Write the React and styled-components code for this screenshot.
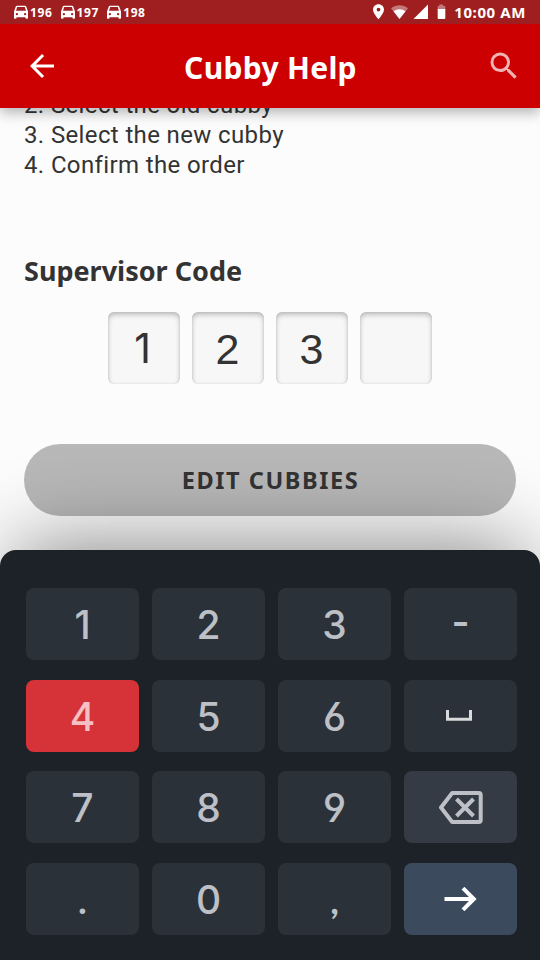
import React from "react";
import styled, { createGlobalStyle } from "styled-components";

const GlobalStyle = createGlobalStyle`
  *, *::before, *::after { box-sizing: border-box; }
  body { margin: 0; background: #fcfcfc; font-family: "Noto Sans", sans-serif; }
  button { border: 0; padding: 0; font: inherit; }
  svg { display: block; flex: none; }
`;

const Screen = styled.div`
  display: flex;
  flex-direction: column;
  width: 540px;
  height: 960px;
  overflow: hidden;
  background: #fcfcfc;
  color: #333;
`;

const StatusBar = styled.div`
  position: relative;
  z-index: 2;
  display: flex;
  align-items: center;
  justify-content: space-between;
  flex: none;
  height: 24px;
  padding: 0 14px 0 13px;
  background: #9f1f21;
  color: #fff;
`;

const Orders = styled.div`
  display: flex;
  gap: 7px;
`;

const Order = styled.span`
  display: flex;
  align-items: center;
  gap: 1px;
  width: 39.6px;
  font: 700 12px/25px "Noto Sans", sans-serif;
  letter-spacing: 0.6px;
`;

const SystemIcons = styled.div`
  display: flex;
  align-items: center;
`;

const Clock = styled.span`
  margin-left: 8px;
  font: 700 15px/24px "Noto Sans", sans-serif;
  letter-spacing: 0.6px;
  white-space: nowrap;
`;

const Header = styled.header`
  position: relative;
  z-index: 1;
  display: grid;
  grid-template-columns: 36px 1fr 36px;
  align-items: center;
  flex: none;
  height: 84px;
  padding: 0 18px 0 24px;
  background: #c00;
  box-shadow: 0 5px 12px rgba(0, 0, 0, 0.28);
`;

const Title = styled.h1`
  margin: 4px 5px 0 0;
  color: #fff;
  font: 700 30px/40px "Noto Sans", sans-serif;
  letter-spacing: 0.3px;
  text-align: center;
`;

const IconButton = styled.button`
  background: none;
  color: ${(p) => (p.$faded ? "rgba(255,255,255,.7)" : "#fff")};
`;

const Content = styled.main`
  display: flex;
  flex-direction: column;
  flex: none;
  height: 442px;
  padding: 0 24px;
`;

const Steps = styled.div`
  margin-top: -18px;
  font: 400 24px/30px Roboto, sans-serif;
  letter-spacing: 0.37px;
`;

const Step = styled.div`
  white-space: pre;
`;

const SectionTitle = styled.h2`
  margin: 71px 0 0;
  font: 700 27px/40px "Noto Sans", sans-serif;
`;

const CodeRow = styled.div`
  display: flex;
  justify-content: center;
  gap: 12px;
  margin-top: 21px;
`;

const CodeBox = styled.div`
  width: 72px;
  height: 72px;
  padding-right: ${(p) => (p.$plainOne ? "3px" : "1px")};
  border-radius: 6px;
  background: #f7f7f7;
  box-shadow: inset 0 3px 5px rgba(0, 0, 0, 0.22), inset 0 0 3px rgba(0, 0, 0, 0.1);
  font: ${(p) => (p.$plainOne ? "400 41px/73px Inter" : '400 43px/74px "Liberation Sans"')}, sans-serif;
  text-align: center;
`;

const EditButton = styled.button`
  flex: none;
  height: 72px;
  margin-top: 60px;
  padding-left: 1px;
  border-radius: 36px;
  background: #b8b8b8;
  color: #333;
  font: 700 23.5px/72px "Noto Sans", sans-serif;
  letter-spacing: 1.6px;
`;

const Keypad = styled.div`
  position: relative;
  display: grid;
  grid-template-columns: repeat(4, 113px);
  grid-auto-rows: 72px;
  gap: 19.8px 13px;
  flex: none;
  height: 410px;
  padding: 37.8px 23px 0 26px;
  border-radius: 16px 16px 0 0;
  background: #1d2228;
  box-shadow: 0 -20px 80px -16px rgba(0, 0, 0, 0.47);
`;

const keyColors = {
  plain: "#2b3138",
  active: "#d63339",
  light: "#343b44",
  enter: "#3b4b5d",
};

const keyFonts = {
  digit: "500 39px/72px Inter",
  mark: "700 37px/72px Lato",
  dash: "600 39px/68px Inter",
};

const keyPadding = {
  digit: "2px 0 0",
  mark: "1px 0 0",
  dash: "0 0 3px",
};

const Key = styled.button`
  display: flex;
  align-items: center;
  justify-content: center;
  padding: ${(p) => keyPadding[p.$kind] || 0};
  border-radius: 8px;
  background: ${(p) => keyColors[p.$tone || "plain"]};
  color: ${(p) => (p.$tone === "active" ? "#f5bfc3" : "#bdc0c6")};
  font: ${(p) => keyFonts[p.$kind] || keyFonts.digit}, sans-serif;
  font-feature-settings: "cv03", "cv04";
`;

const CarIcon = () => (
  <svg width="16" height="14" viewBox="0 0 16 14" fill="currentColor">
    <path fillRule="evenodd" d="M4 .8h8c.7 0 1.1.3 1.3.9L15 6.5V13c0 .5-.3.8-.8.8h-.9c-.5 0-.8-.3-.8-.8v-.8h-9v.8c0 .5-.3.8-.8.8h-.9c-.5 0-.8-.3-.8-.8V6.5l1.700-4.800C2.900 1.100 3.300.8 4 .8ZM4.200 2 3 5.700h10L11.800 2ZM3.900 8a1.150 1.150 0 1 0 0 2.300 1.150 1.150 0 0 0 0-2.300Zm8.200 0a1.150 1.150 0 1 0 0 2.300 1.150 1.150 0 0 0 0-2.300Z" />
  </svg>
);

const BackIcon = () => (
  <svg width="36" height="36" viewBox="0 0 24 24" fill="currentColor">
    <path d="M20 11H7.830l5.590-5.590L12 4l-8 8 8 8 1.410-1.410L7.830 13H20z" />
  </svg>
);

const SearchIcon = () => (
  <svg width="36" height="36" viewBox="0 0 24 24" fill="currentColor">
    <path d="M15.500 14h-.79l-.28-.27A6.471 6.471 0 0 0 16 9.500 6.500 6.500 0 1 0 9.500 16c1.610 0 3.090-.59 4.230-1.570l.27.28v.79l5 4.990L20.490 19zm-6 0C7.010 14 5 11.990 5 9.500S7.010 5 9.500 5 14 7.010 14 9.500 11.990 14 9.500 14" />
  </svg>
);

const StatusGlyphs = () => (
  <svg width="74" height="16" viewBox="0 0 74 16" fill="#fff">
    <path fillRule="evenodd" d="M6.500.2C3.400.2 1 2.600 1 5.600 1 9.500 6.500 15.300 6.500 15.300S12 9.500 12 5.600C12 2.600 9.600.2 6.500.2Zm0 3.500a1.900 1.900 0 1 1 0 3.800 1.900 1.900 0 0 1 0-3.800Z" />
    <path opacity=".4" d="M27.500 15 19 4.300c5-4.200 12-4.200 17 0Z" />
    <path d="M27.500 15 21.500 7.300c3.600-2.800 8.400-2.800 12 0Z" />
    <path d="M56 .5V15H41.500Z" />
    <path opacity=".4" d="M67.300.5h3.800v1.400h2.200v4h-7.600v-4h1.600Z" />
    <path d="M65.700 5h7.600v9c0 .7-.4 1-1 1h-5.600c-.6 0-1-.3-1-1Z" />
  </svg>
);

const SpaceIcon = () => (
  <svg width="30" height="11" viewBox="0 0 30 11" fill="none" stroke="#d8dadb" strokeWidth="3">
    <path d="M1.500 0v9.300h23V0" />
  </svg>
);

const BackspaceIcon = () => (
  <svg width="44" height="33" viewBox="0 0 44 33" fill="none" stroke="currentColor" strokeWidth="4">
    <path strokeLinejoin="round" d="M13.200 2h26.500c1.300 0 2 .7 2 2v25c0 1.300-.7 2-2 2H13.200L2 16.500Z" />
    <path d="m17.500 8 17 17m0-17-17 17" />
  </svg>
);

const EnterIcon = () => (
  <svg width="33" height="24" viewBox="0 0 33 24" fill="none" stroke="#fff" strokeWidth="4">
    <path d="M.5 12H30M19 1.200 29.800 12 19 22.800" />
  </svg>
);

const keys = [
  { label: "1" }, { label: "2" }, { label: "3" }, { label: "-", kind: "dash" },
  { label: "4", tone: "active" }, { label: "5" }, { label: "6" }, { icon: <SpaceIcon /> },
  { label: "7" }, { label: "8" }, { label: "9" }, { icon: <BackspaceIcon />, tone: "light" },
  { label: ".", kind: "mark" }, { label: "0" }, { label: ",", kind: "mark" }, { icon: <EnterIcon />, tone: "enter" },
];

export default function App() {
  return (
    <Screen>
      <GlobalStyle />
      <StatusBar>
        <Orders>
          {["196", "197", "198"].map((n) => (
            <Order key={n}><CarIcon />{n}</Order>
          ))}
        </Orders>
        <SystemIcons>
          <StatusGlyphs />
          <Clock>10:00 AM</Clock>
        </SystemIcons>
      </StatusBar>
      <Header>
        <IconButton><BackIcon /></IconButton>
        <Title>Cubby Help</Title>
        <IconButton $faded><SearchIcon /></IconButton>
      </Header>
      <Content>
        <Steps>
          <Step>2. Select the old cubby</Step>
          <Step>3. Select the new cubby</Step>
          <Step>4. Confirm the order</Step>
        </Steps>
        <SectionTitle>Supervisor Code</SectionTitle>
        <CodeRow>
          {["1", "2", "3", ""].map((d, i) => <CodeBox key={i} $plainOne={d === "1"}>{d}</CodeBox>)}
        </CodeRow>
        <EditButton>EDIT CUBBIES</EditButton>
      </Content>
      <Keypad>
        {keys.map((k, i) => (
          <Key key={i} $tone={k.tone} $kind={k.icon ? "icon" : k.kind || "digit"}>{k.icon || k.label}</Key>
        ))}
      </Keypad>
    </Screen>
  );
}
